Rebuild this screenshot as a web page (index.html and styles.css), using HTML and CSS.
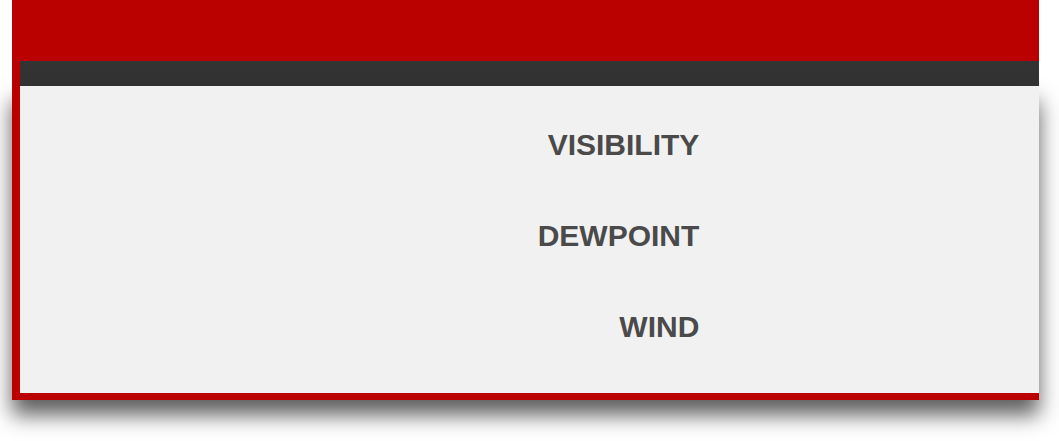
FILE: index.html
```html
<!DOCTYPE html>
<html>
<head>
<meta charset="utf-8">
<link rel="stylesheet" href="styles.css">
</head>
<body>
<div class="app">
  <div class="top"></div>
  <div class="bar"></div>
  <div class="body">
    <div class="panel">
      <div class="row"><div class="label">VISIBILITY</div><div class="value"></div></div>
      <div class="row"><div class="label">DEWPOINT</div><div class="value"></div></div>
      <div class="row"><div class="label">WIND</div><div class="value"></div></div>
    </div>
  </div>
</div>
</body>
</html>
```

FILE: styles.css
```css
html, body {
  margin: 0;
  padding: 0;
  background: #ffffff;
}
body {
  font-family: "Liberation Sans", Arial, sans-serif;
  padding-bottom: 42px;
}
.app {
  margin: 0 20px 0 12px;
  background: #bb0000;
}
.top {
  height: 61px;
}
.bar {
  margin-left: 8px;
  height: 25px;
  background: #333333;
}
.body {
  background: #bb0000;
  padding: 0 0 7px 8px;
  box-shadow: 0 15px 20px rgba(0, 0, 0, 0.63);
}
.panel {
  background: #f1f1f1;
  padding: 13px 0 21px;
}
.row {
  display: grid;
  grid-template-columns: 66.667% 1fr;
  height: 91px;
  align-items: center;
}
.label {
  text-align: right;
  font-weight: bold;
  font-size: 30px;
  color: #4a4a4a;
}
```
